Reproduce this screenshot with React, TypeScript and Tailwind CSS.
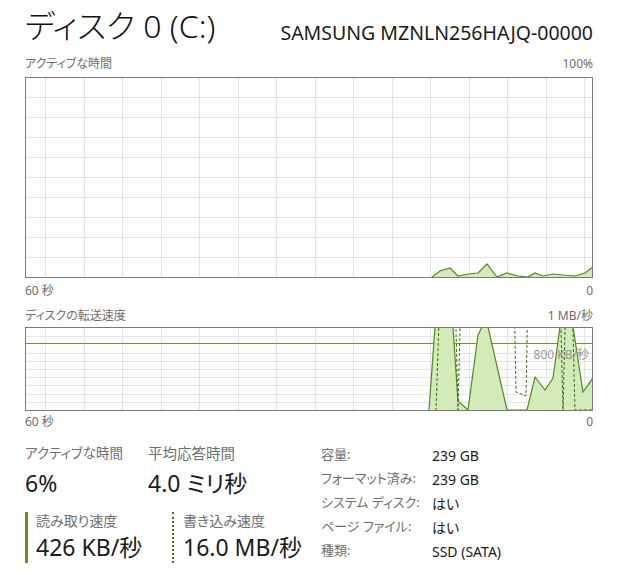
import React from "react";

const cols = Array.from({ length: 15 }, (_, i) => 19 + i * 38.5);

const activePts: [number, number][] = [
  [406, 199], [414, 193], [424, 190], [432, 198], [442, 196], [452, 195],
  [461, 186], [471, 199], [481, 195], [492, 198], [502, 199], [509, 195],
  [517, 198], [527, 196], [537, 197], [549, 198], [559, 195], [567, 189],
];

const readPts: [number, number][] = [
  [403, 82], [409, -1], [412, -28], [424, -28], [427, -1], [432, 73],
  [442, 82], [452, 7], [456, -1], [459, -13], [462, -1], [481, 82],
  [501, 82], [509, 49], [519, 62], [527, 50], [534, -1], [539, -18],
  [545, -18], [547, -1], [557, 64], [567, 50],
];

const writePts: [number, number][] = [
  [410, 83], [414, -38], [429, -38], [432, 82], [435, -38], [488, -38],
  [490, 64], [500, 68], [502, -38], [534, -38], [537, 82], [540, -38],
  [546, -38], [549, 82], [567, 82],
];

const line = (pts: [number, number][]) =>
  pts.map(([x, y], i) => `${i ? "L" : "M"}${x} ${y}`).join(" ");

const area = (pts: [number, number][], base: number) =>
  `${line(pts)} L${pts[pts.length - 1][0]} ${base} L${pts[0][0]} ${base} Z`;

function Grid({ h, rows }: { h: number; rows: number[] }) {
  return (
    <g stroke="#e4e4e4" strokeWidth={1} shapeRendering="crispEdges">
      {cols.map((x) => (
        <line key={"v" + x} x1={Math.round(x) + 0.5} x2={Math.round(x) + 0.5} y1={0} y2={h} />
      ))}
      {rows.map((y) => (
        <line key={"h" + y} x1={0} x2={566} y1={Math.round(y) + 0.5} y2={Math.round(y) + 0.5} />
      ))}
    </g>
  );
}

const Caption = ({ left, right, className }: { left: string; right: string; className: string }) => (
  <div className={`flex items-center justify-between text-[12px] text-[#6e6e6e] ${className}`}>
    <span>{left}</span>
    <span>{right}</span>
  </div>
);

const InfoRow = ({ label, value }: { label: string; value: string }) => (
  <div className="flex h-[24px] items-center">
    <span className="w-[111px] text-[13px] text-[#6e6e6e]">{label}</span>
    <span className="text-[14px] text-[#1a1a1a]">{value}</span>
  </div>
);

export default function App() {
  return (
    <div className="w-[620px] h-[587px] overflow-hidden bg-white pl-[25px] pr-[27px] font-['Noto_Sans','Noto_Sans_CJK_JP',sans-serif] [font-feature-settings:'palt']">
      {/* header */}
      <div className="flex h-[51px] items-end justify-between pb-[4px]">
        <h1 className="text-[32px] font-light leading-[42px] text-[#111]">ディスク 0 (C:)</h1>
        <span className="text-[19.5px] leading-[28px] text-[#1a1a1a]">SAMSUNG MZNLN256HAJQ-00000</span>
      </div>

      <Caption left="アクティブな時間" right="100%" className="h-[26px]" />

      {/* active time chart */}
      <div className="h-[201px] border border-[#7a7a7a]">
        <svg width="566" height="199" viewBox="0 0 566 199" className="block overflow-hidden">
          <Grid h={199} rows={[19, 39, 59, 79, 99, 119, 139, 159, 179]} />
          <path d={area(activePts, 200)} fill="#d2ebb9" />
          <path d={line(activePts)} fill="none" stroke="#4f8a22" strokeWidth={1.2} />
        </svg>
      </div>

      <Caption left="60 秒" right="0" className="h-[26px]" />
      <Caption left="ディスクの転送速度" right="1 MB/秒" className="h-[23px]" />

      {/* transfer rate chart */}
      <div className="relative h-[84px] border border-[#7a7a7a]">
        <svg width="566" height="82" viewBox="0 0 566 82" className="block overflow-hidden">
          <Grid h={82} rows={[8, 24.6, 32.8, 41, 49.2, 57.4, 65.6, 73.8]} />
          <line x1={0} x2={566} y1={15.5} y2={15.5} stroke="#6b9a2a" strokeWidth={1} />
          <path d={area(readPts, 83)} fill="#d2ebb9" />
          <path d={line(readPts)} fill="none" stroke="#4f8a22" strokeWidth={1.2} />
          <path d={line(writePts)} fill="none" stroke="#3f6a18" strokeWidth={1} strokeDasharray="3 2" />
        </svg>
        <span className="absolute right-[3px] top-[20px] text-[12px] leading-[14px] text-[#8a8a8a]/90">
          800 KB/秒
        </span>
      </div>

      <Caption left="60 秒" right="0" className="h-[22px]" />

      {/* stats */}
      <div className="flex">
        <div className="w-[296px]">
          <div className="flex">
            <div className="w-[123px]">
              <div className="mt-[10px] text-[13.5px] leading-[20px] text-[#6e6e6e]">アクティブな時間</div>
              <div className="mt-[5px] text-[23px] leading-[30px] text-[#1a1a1a]">6%</div>
            </div>
            <div>
              <div className="mt-[10px] text-[14.5px] leading-[20px] text-[#6e6e6e]">平均応答時間</div>
              <div className="mt-[5px] text-[23px] leading-[30px] text-[#1a1a1a]">4.0 ミリ秒</div>
            </div>
          </div>
          <div className="mt-[14px] flex h-[51px]">
            <div className="w-[147px] border-l-[3px] border-[#6a8a32] pl-[8px]">
              <div className="text-[14px] leading-[17px] text-[#6e6e6e]">読み取り速度</div>
              <div className="mt-[3px] text-[23px] leading-[30px] text-[#1a1a1a]">426 KB/秒</div>
            </div>
            <div className="border-l-2 border-dotted border-[#4f6a22] pl-[9px]">
              <div className="text-[14px] leading-[17px] text-[#6e6e6e]">書き込み速度</div>
              <div className="mt-[3px] text-[23px] leading-[30px] text-[#1a1a1a]">16.0 MB/秒</div>
            </div>
          </div>
        </div>
        <div className="mt-[10px]">
          <InfoRow label="容量:" value="239 GB" />
          <InfoRow label="フォーマット済み:" value="239 GB" />
          <InfoRow label="システム ディスク:" value="はい" />
          <InfoRow label="ページ ファイル:" value="はい" />
          <InfoRow label="種類:" value="SSD (SATA)" />
        </div>
      </div>
    </div>
  );
}
